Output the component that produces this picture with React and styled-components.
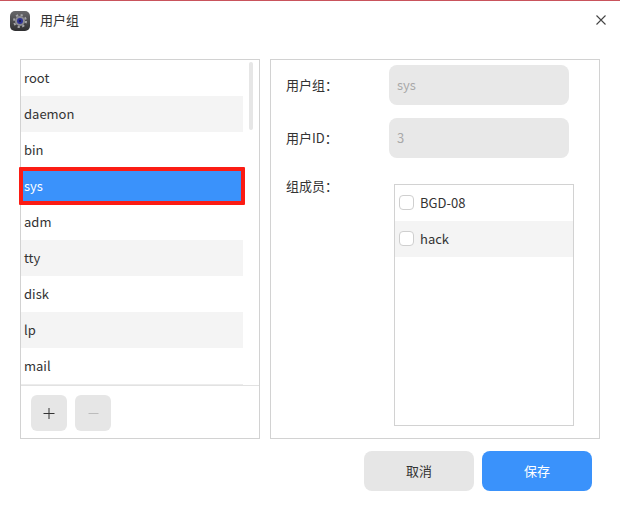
import React from "react";
import styled, { createGlobalStyle } from "styled-components";

const GlobalStyle = createGlobalStyle`
  html, body {
    margin: 0;
    padding: 0;
    background: #fff;
  }
  * {
    box-sizing: border-box;
  }
`;

const Dialog = styled.div`
  width: 620px;
  height: 518px;
  display: flex;
  flex-flow: column nowrap;
  background: #fff;
  border-top: 1px solid #c9545c;
  font-family: "Noto Sans CJK SC", "Noto Sans", sans-serif;
  font-size: 13px;
  color: #333;
  overflow: hidden;
`;

const TitleBar = styled.header`
  height: 58px;
  flex: none;
  display: flex;
  align-items: flex-start;
  padding: 10px 14px 0 10px;
`;

const AppIcon = styled.svg`
  width: 20px;
  height: 20px;
  flex: none;
`;

const Title = styled.h1`
  margin: 0 0 0 10px;
  font-size: 13px;
  font-weight: 400;
  line-height: 18px;
  color: #333;
  flex: 1;
`;

const CloseButton = styled.svg`
  width: 10px;
  height: 10px;
  margin-top: 4px;
`;

const Body = styled.main`
  display: flex;
  gap: 10px;
  padding: 0 20px;
`;

const ListPanel = styled.section`
  width: 240px;
  height: 380px;
  flex: none;
  position: relative;
  display: flex;
  flex-flow: column nowrap;
  border: 1px solid #d2d2d2;
`;

const GroupList = styled.ul`
  list-style: none;
  margin: 0;
  padding: 0;
  width: 222px;
  height: 325px;
  border-bottom: 1px solid #ececec;
`;

const GroupRow = styled.li`
  position: relative;
  height: 36px;
  display: flex;
  align-items: center;
  padding: 0 0 1px 3px;
  background: ${(p) => (p.$selected ? "#3a92fb" : p.$odd ? "#f4f4f4" : "transparent")};
  color: ${(p) => (p.$selected ? "#fff" : "#333")};

  ${(p) =>
    p.$selected &&
    `
    &::after {
      content: "";
      position: absolute;
      inset: -1px -2px;
      border: 4px solid #fb1c14;
      border-radius: 1px;
    }
  `}
`;

const ScrollThumb = styled.div`
  position: absolute;
  top: 2px;
  left: 228px;
  width: 4px;
  height: 68px;
  border-radius: 2px;
  background: #e6e6e6;
`;

const ListActions = styled.div`
  flex: 1;
  display: flex;
  align-items: flex-start;
  gap: 8px;
  padding: 9px 10px 0;
  border-top: 1px solid #e2e2e2;
`;

const IconButton = styled.button`
  width: 36px;
  height: 36px;
  padding: 0;
  border: 0;
  border-radius: 6px;
  background: #e6e6e6;
  display: flex;
  align-items: center;
  justify-content: center;

  svg {
    width: 13px;
    height: 13px;
    stroke: ${(p) => (p.disabled ? "#bcbcbc" : "#333")};
  }
`;

const DetailPanel = styled.section`
  width: 330px;
  height: 380px;
  flex: none;
  display: flex;
  flex-flow: column nowrap;
  padding: 5px 0 0 15px;
  border: 1px solid #d2d2d2;
`;

const FieldRow = styled.div`
  display: flex;
  align-items: center;
  height: 40px;
  margin-bottom: 13px;
`;

const FieldLabel = styled.label`
  width: 103px;
  flex: none;
  color: #333;
  line-height: 20px;
`;

const ReadonlyValue = styled.div`
  width: 180px;
  height: 40px;
  display: flex;
  align-items: center;
  padding: 0 0 1px 8px;
  border-radius: 8px;
  background: #e8e8e8;
  color: #a8a8a8;
`;

const MembersRow = styled.div`
  display: flex;
  align-items: flex-start;
  margin-top: 13px;
`;

const MembersLabel = styled(FieldLabel)`
  width: 108px;
  margin-top: -8px;
`;

const MemberList = styled.ul`
  list-style: none;
  margin: 0;
  padding: 0;
  width: 180px;
  height: 242px;
  border: 1px solid #d2d2d2;
`;

const MemberRow = styled.li`
  height: 36px;
  display: flex;
  align-items: center;
  gap: 6px;
  padding: 0 0 1px 4px;
  background: ${(p) => (p.$odd ? "#f4f4f4" : "transparent")};
`;

const CheckBox = styled.span`
  width: 15px;
  height: 15px;
  flex: none;
  border: 1px solid #cfcfcf;
  border-radius: 4px;
  background: #fff;
`;

const Footer = styled.footer`
  display: flex;
  justify-content: flex-end;
  gap: 8px;
  padding: 12px 28px 0 0;
`;

const DialogButton = styled.button`
  width: 110px;
  height: 40px;
  padding: 0 0 2px;
  border: 0;
  border-radius: 8px;
  font-family: inherit;
  font-size: 13px;
  background: ${(p) => (p.$primary ? "#3a92fb" : "#e6e6e6")};
  color: ${(p) => (p.$primary ? "#fff" : "#333")};
`;

const groups = ["root", "daemon", "bin", "sys", "adm", "tty", "disk", "lp", "mail"];
const members = ["BGD-08", "hack"];

const GearIcon = () => (
  <AppIcon viewBox="0 0 20 20">
    <defs>
      <linearGradient id="tile" x1="0" y1="0" x2="0" y2="1">
        <stop offset="0" stopColor="#68686b" />
        <stop offset="1" stopColor="#2f2f31" />
      </linearGradient>
    </defs>
    <rect width="20" height="20" rx="5" fill="url(#tile)" />
    <circle cx="10" cy="10" r="6" fill="none" stroke="#a4a4a8" strokeWidth="2" strokeDasharray="2.2 2.5" />
    <circle cx="10" cy="10" r="5" fill="#8b8b90" />
    <circle cx="10" cy="10" r="3" fill="#2f3396" />
    <circle cx="10" cy="10" r="1.2" fill="#1a1b4d" />
  </AppIcon>
);

const App = () => {
  return (
    <Dialog>
      <GlobalStyle />
      <TitleBar>
        <GearIcon />
        <Title>用户组</Title>
        <CloseButton viewBox="0 0 10 10">
          <path d="M0.5 0.5 L9.5 9.5 M9.5 0.5 L0.5 9.5" stroke="#444" strokeWidth="1.1" fill="none" />
        </CloseButton>
      </TitleBar>
      <Body>
        <ListPanel>
          <GroupList>
            {groups.map((name, i) => (
              <GroupRow key={name} $odd={i % 2 === 1} $selected={name === "sys"}>
                {name}
              </GroupRow>
            ))}
          </GroupList>
          <ScrollThumb />
          <ListActions>
            <IconButton>
              <svg viewBox="0 0 13 13">
                <path d="M6 1 V12 M0.5 6.5 H11.5" fill="none" strokeWidth="1" />
              </svg>
            </IconButton>
            <IconButton disabled>
              <svg viewBox="0 0 13 13">
                <path d="M1.5 6.5 H11.5" fill="none" strokeWidth="1" />
              </svg>
            </IconButton>
          </ListActions>
        </ListPanel>
        <DetailPanel>
          <FieldRow>
            <FieldLabel>用户组：</FieldLabel>
            <ReadonlyValue>sys</ReadonlyValue>
          </FieldRow>
          <FieldRow>
            <FieldLabel>用户ID：</FieldLabel>
            <ReadonlyValue>3</ReadonlyValue>
          </FieldRow>
          <MembersRow>
            <MembersLabel>组成员：</MembersLabel>
            <MemberList>
              {members.map((name, i) => (
                <MemberRow key={name} $odd={i % 2 === 1}>
                  <CheckBox />
                  {name}
                </MemberRow>
              ))}
            </MemberList>
          </MembersRow>
        </DetailPanel>
      </Body>
      <Footer>
        <DialogButton>取消</DialogButton>
        <DialogButton $primary>保存</DialogButton>
      </Footer>
    </Dialog>
  );
};

export default App;
